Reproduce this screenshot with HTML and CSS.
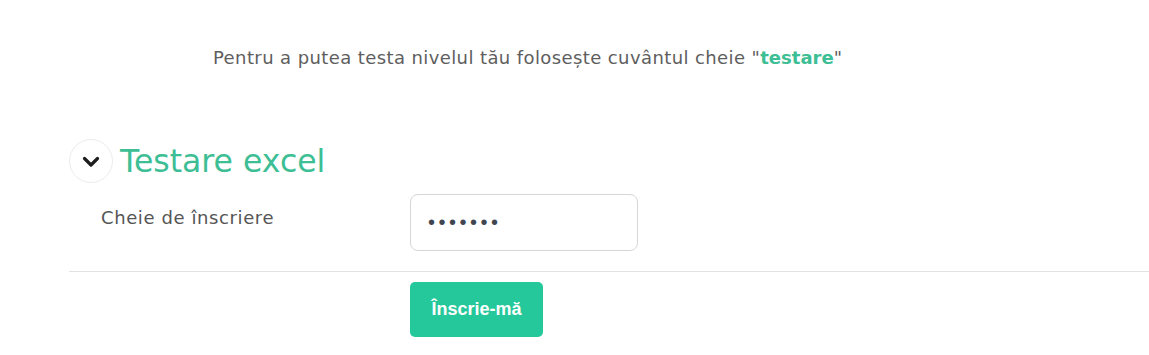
FILE: index.html
```html
<!DOCTYPE html>
<html lang="ro">
<head>
<meta charset="utf-8">
<title>Testare excel</title>
<link rel="stylesheet" href="styles.css">
</head>
<body>
<p class="intro">Pentru a putea testa nivelul tău folosește cuvântul cheie "<strong>testare</strong>"</p>
<section class="enrol">
  <div class="enrol-head">
    <span class="toggle">
      <svg width="18" height="12" viewBox="0 0 18 12"><path d="M2.5 2.5 L9 9 L15.5 2.5" fill="none" stroke="#1d1d1d" stroke-width="3.2" stroke-linecap="round" stroke-linejoin="round"/></svg>
    </span>
    <h2 class="title">Testare excel</h2>
  </div>
  <div class="field">
    <label class="label" for="key">Cheie de înscriere</label>
    <input id="key" class="key" type="password" value="testare">
  </div>
  <hr class="sep">
  <div class="actions">
    <button class="btn" type="button">Înscrie-mă</button>
  </div>
</section>
</body>
</html>
```
FILE: styles.css
```css
html, body { margin: 0; padding: 0; background: #fff; }
body { font-family: "DejaVu Sans", "Liberation Sans", sans-serif; color: #555; }
.intro {
  margin: 0;
  padding: 46px 0 0 213px;
  font-size: 18px;
  letter-spacing: 0.4px;
  line-height: 24px;
  color: #5e5e5e;
}
.intro strong { color: #3dbe94; font-weight: 700; letter-spacing: 0; }
.enrol { padding: 69px 0 0 69px; }
.enrol-head { display: flex; align-items: center; gap: 7px; height: 44px; }
.toggle {
  width: 44px; height: 44px; border-radius: 50%;
  border: 1px solid #ececec;
  display: flex; align-items: center; justify-content: center;
  padding-top: 2px; box-sizing: border-box;
}
.title {
  margin: 0; font-weight: 400; font-size: 31.5px; color: #3dbe94; line-height: 44px;
}
.field { display: flex; align-items: center; margin-top: 11px; }
.label { width: 309px; padding-left: 32px; font-size: 18px; letter-spacing: 0.6px; color: #555; margin-top: -10px; }
.key {
  box-sizing: border-box; width: 228px; height: 57px;
  border: 1px solid #d6d6d6; border-radius: 8px;
  padding: 0 17px; font-size: 20px; color: #3f4650; letter-spacing: 3.5px;
  font-family: "Liberation Sans", sans-serif; outline: none;
}
.sep { border: 0; border-top: 1px solid #e2e2e2; margin: 20px 0 10px 0; }
.actions { padding-left: 341px; }
.btn {
  width: 133px; height: 55px; border: 0; border-radius: 5px;
  background: #25c89a; color: #fff; font-weight: 700; font-size: 18px;
  font-family: "Liberation Sans", sans-serif;
}
```
